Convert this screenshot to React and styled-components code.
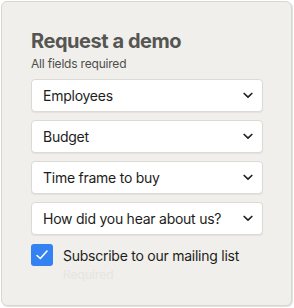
import React, { useState } from 'react';
import styled, { createGlobalStyle } from 'styled-components';

const Global = createGlobalStyle`
body {
  margin: 0;
  background: #ffffff;
  font-family: Inter, "Liberation Sans", sans-serif;
}
`;

const Card = styled.div`
margin: 1px;
width: 291px;
height: 305px;
box-sizing: border-box;
background: #f0efeb;
border: 1px solid #d9d7d1;
border-radius: 6px;
box-shadow: 1px 1px 0 #e2e1dc;
padding: 26px 29px 0 29px;
display: flex;
flex-direction: column;
`;

const Title = styled.h1`
margin: 0;
font-size: 20px;
line-height: 26px;
font-weight: 700;
color: #555552;
letter-spacing: -0.45px;
`;

const Sub = styled.p`
margin: 2px 0 0 0;
font-size: 12px;
line-height: 16px;
color: #4e4e4b;
letter-spacing: -0.2px;
`;

const Fields = styled.div`
margin-top: 7px;
display: flex;
flex-direction: column;
gap: 8px;
width: 232px;
`;

const Select = styled.div`
height: 33px;
box-sizing: border-box;
background: #ffffff;
border: 1px solid #dcdad5;
border-radius: 4px;
box-shadow: 0 1px 1px rgba(0, 0, 0, 0.06);
display: flex;
align-items: center;
justify-content: space-between;
padding: 0 9px 0 11px;
font-size: 14px;
letter-spacing: -0.25px;
color: #1d1d1b;
`;

const Chevron = () => (
  <svg width="10" height="7" viewBox="0 0 10 7">
    <path d="M1.2 1.5 L5 5.2 L8.8 1.5" fill="none" stroke="#222" strokeWidth="1.7" strokeLinecap="round" strokeLinejoin="round" />
  </svg>
);

const CheckRow = styled.label`
margin-top: 9px;
display: flex;
align-items: flex-start;
gap: 10px;
cursor: pointer;
`;

const Box = styled.span`
width: 22px;
height: 22px;
border-radius: 3px;
background: ${p => (p.checked ? '#3481f1' : '#ffffff')};
display: flex;
align-items: center;
justify-content: center;
flex-shrink: 0;
`;

const CheckText = styled.div`
display: flex;
flex-direction: column;
padding-top: 3px;
`;

const Label = styled.span`
font-size: 14px;
line-height: 18px;
letter-spacing: -0.25px;
color: #1d1d1b;
`;

const Hint = styled.span`
margin-top: 2px;
font-size: 12px;
line-height: 15px;
color: #e6e5e0;
`;

const fields = ['Employees', 'Budget', 'Time frame to buy', 'How did you hear about us?'];

const App = () => {
  const [checked, setChecked] = useState(true);
  return (
    <Card>
      <Global />
      <Title>Request a demo</Title>
      <Sub>All fields required</Sub>
      <Fields>
        {fields.map(f => (
          <Select key={f}>
            {f}
            <Chevron />
          </Select>
        ))}
      </Fields>
      <CheckRow onClick={() => setChecked(!checked)}>
        <Box checked={checked}>
          {checked && (
            <svg width="14" height="12" viewBox="0 0 14 12">
              <path d="M2 6.5 L5.3 9.5 L12 2" fill="none" stroke="#fff" strokeWidth="1.6" strokeLinecap="round" strokeLinejoin="round" />
            </svg>
          )}
        </Box>
        <CheckText>
          <Label>Subscribe to our mailing list</Label>
          <Hint>Required</Hint>
        </CheckText>
      </CheckRow>
    </Card>
  );
};

export default App;
